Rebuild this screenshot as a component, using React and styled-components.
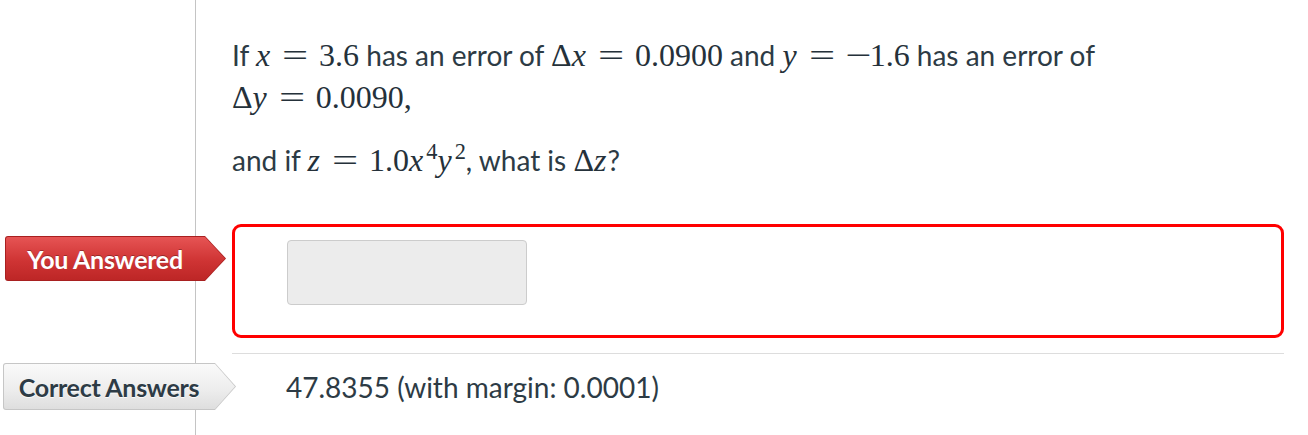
import React from 'react';
import styled, { createGlobalStyle } from 'styled-components';

const GlobalStyle = createGlobalStyle`
  html, body {
    margin: 0;
    padding: 0;
    background: #fff;
  }
  body {
    font-family: Lato, "Liberation Sans", sans-serif;
    color: #2d3b45;
  }
`;

const Page = styled.div`
  min-height: 100vh;
  padding: 34px 24px 0 0;
  box-sizing: border-box;
  background: linear-gradient(#c4c4c4, #c4c4c4) 195px 0 / 1px 100% no-repeat;
`;

const Question = styled.div`
  margin-left: 232px;
  max-width: 1000px;
  font-size: 28px;
  line-height: 42px;
`;

const Para = styled.p`
  margin: 0 0 21px;
`;

const Math = styled.span`
  font-family: "Liberation Serif", "DejaVu Serif", serif;
  font-size: 32px;
  line-height: 1;
  white-space: nowrap;
  color: #25313a;
`;

const Var = styled.i`
  font-family: "Liberation Serif", serif;
  font-style: italic;
  margin-right: 1px;
`;

// wide operator glyph like the TeX "=" and "−"
const Op = styled.span`
  display: inline-block;
  width: ${p => p.$w}px;
  margin: 0 ${p => p.$m}px;
  text-align: center;
  transform: scaleX(1.45);
`;

const Sup = styled.sup`
  font-size: 0.7em;
  line-height: 0;
  vertical-align: 0.55em;
  margin-left: 2px;
`;

const AnswerRow = styled.div`
  display: grid;
  grid-template-columns: 232px 1fr;
  align-items: start;
  margin-top: ${p => p.$gap}px;
`;

const LabelCell = styled.div`
  padding-top: ${p => p.$top}px;
  padding-left: ${p => p.$left}px;
`;

const BadgeOutline = styled.div`
  display: inline-block;
  width: ${p => p.$width}px;
  height: ${p => p.$height}px;
  padding: 1px;
  box-sizing: border-box;
  border-radius: 3px;
  background: ${p => (p.$red ? '#a82020' : '#c6c6c6')};
  clip-path: polygon(0 0, calc(100% - 21px) 0, 100% 50%, calc(100% - 21px) 100%, 0 100%);
`;

const BadgeInner = styled.div`
  height: 100%;
  display: flex;
  align-items: center;
  justify-content: center;
  padding-right: 21px;
  box-sizing: border-box;
  border-radius: 2px;
  clip-path: polygon(0 0, calc(100% - 20px) 0, 100% 50%, calc(100% - 20px) 100%, 0 100%);
  background: ${p =>
    p.$red
      ? 'linear-gradient(#e65454, #cf3434 55%, #bd2626)'
      : 'linear-gradient(#fafafa, #ececec 60%, #dedede)'};
  color: ${p => (p.$red ? '#fff' : '#2d3b45')};
  text-shadow: ${p => (p.$red ? '0 -1px 0 rgba(0,0,0,0.3)' : '0 1px 0 rgba(255,255,255,0.8)')};
  font-size: 25px;
  font-weight: 700;
  letter-spacing: -0.3px;
  white-space: nowrap;
`;

const WrongBox = styled.div`
  border: 3px solid #ff0000;
  border-radius: 9px;
  height: 114px;
  box-sizing: border-box;
  padding: 13px 0 0 52px;
`;

const AnswerInput = styled.div`
  width: 240px;
  height: 65px;
  box-sizing: border-box;
  background: #ececec;
  border: 1px solid #cccccc;
  border-radius: 4px;
`;

const CorrectCell = styled.div`
  border-top: 1px solid #dddddd;
  padding: 14px 0 0 54px;
  font-size: 28px;
  line-height: 38px;
`;

function Badge({ red, width, height, children }) {
  return (
    <BadgeOutline $red={red} $width={width} $height={height}>
      <BadgeInner $red={red}>{children}</BadgeInner>
    </BadgeOutline>
  );
}

const Eq = () => <Op $w={24} $m={12}>=</Op>;
const Minus = () => <Op $w={24} $m={0}>−</Op>;

function App() {
  return (
    <Page>
      <GlobalStyle />
      <Question>
        <Para>
          If <Math><Var>x</Var><Eq />3.6</Math> has an error of{' '}
          <Math>Δ<Var>x</Var><Eq />0.0900</Math> and{' '}
          <Math><Var>y</Var><Eq /><Minus />1.6</Math> has an error of{' '}
          <Math>Δ<Var>y</Var><Eq />0.0090,</Math>
        </Para>
        <Para>
          and if{' '}
          <Math>
            <Var>z</Var><Eq />1.0<Var>x</Var><Sup>4</Sup><Var>y</Var><Sup>2</Sup>
          </Math>
          , what is <Math>Δ<Var>z</Var></Math>?
        </Para>
      </Question>

      <AnswerRow $gap={43}>
        <LabelCell $top={12} $left={5}>
          <Badge red width={221} height={45}>You Answered</Badge>
        </LabelCell>
        <WrongBox>
          <AnswerInput />
        </WrongBox>
      </AnswerRow>

      <AnswerRow $gap={15}>
        <LabelCell $top={10} $left={3}>
          <Badge width={233} height={47}>Correct Answers</Badge>
        </LabelCell>
        <CorrectCell>47.8355 (with margin: 0.0001)</CorrectCell>
      </AnswerRow>
    </Page>
  );
}

export default App;
